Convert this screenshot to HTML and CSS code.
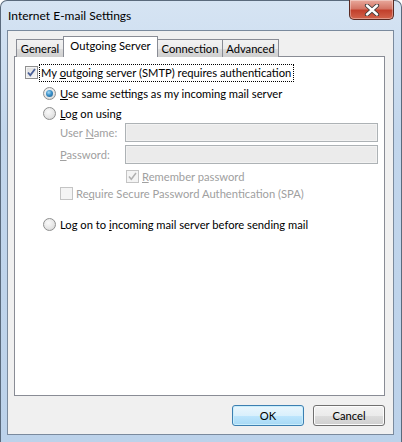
FILE: index.html
```html
<!DOCTYPE html>
<html>
<head>
<meta charset="utf-8">
<link rel="stylesheet" href="styles.css">
</head>
<body>
<div class="window">
  <div class="titlebar">
    <span class="title">Internet E-mail Settings</span>
    <div class="close">
      <svg width="16" height="12" viewBox="0 0 16 12"><path d="M3 1.5 L13 10.5 M13 1.5 L3 10.5" stroke="#3a3a3a" stroke-width="4.2" stroke-linecap="round"/><path d="M3 1.5 L13 10.5 M13 1.5 L3 10.5" stroke="#fff" stroke-width="2.4" stroke-linecap="round"/></svg>
    </div>
  </div>
  <div class="client">
    <div class="tabs">
      <div class="tab t-gen">General</div>
      <div class="tab active">Outgoing Server</div>
      <div class="tab t-con">Connection</div>
      <div class="tab t-adv">Advanced</div>
    </div>
    <div class="panel">
      <div class="row auth">
        <span class="cb"><svg width="13" height="13" viewBox="0 0 13 13"><path d="M3 6.5 L5.3 9.3 L10 3" fill="none" stroke="#4a5f97" stroke-width="1.8"/></svg></span>
        <span class="focus">My <u>o</u>utgoing server (SMTP) requires authentication</span>
      </div>
      <div class="row radio-row r1">
        <span class="rb on"></span>
        <span class="lbl"><u>U</u>se same settings as my incoming mail server</span>
      </div>
      <div class="row radio-row r2">
        <span class="rb"></span>
        <span class="lbl"><u>L</u>og on using</span>
      </div>
      <div class="field f1">
        <span class="flabel">User <u>N</u>ame:</span>
        <span class="input"></span>
      </div>
      <div class="field f2">
        <span class="flabel"><u>P</u>assword:</span>
        <span class="input"></span>
      </div>
      <div class="row remember">
        <span class="cb dis"><svg width="13" height="13" viewBox="0 0 13 13"><path d="M3 6.5 L5.3 9.3 L10 3" fill="none" stroke="#b0b0b0" stroke-width="1.5"/></svg></span>
        <span class="lbl dim"><u>R</u>emember password</span>
      </div>
      <div class="row spa">
        <span class="cb dis"></span>
        <span class="lbl dim">Re<u>q</u>uire Secure Password Authentication (SPA)</span>
      </div>
      <div class="row radio-row r3">
        <span class="rb"></span>
        <span class="lbl">Log on to <u>i</u>ncoming mail server before sending mail</span>
      </div>
    </div>
    <div class="buttons">
      <button class="btn default">OK</button>
      <button class="btn">Cancel</button>
    </div>
  </div>
</div>
</body>
</html>
```
FILE: styles.css
```css
html, body {
  margin: 0;
  padding: 0;
  background: #ffffff;
}
body {
  width: 402px;
  height: 442px;
  overflow: hidden;
  font-family: "Lato", "Noto Sans", sans-serif;
  font-size: 11.2px;
  color: #000;
}
.window {
  box-sizing: border-box;
  width: 402px;
  height: 442px;
  border: 1px solid #5a6a7c;
  border-bottom: none;
  border-radius: 7px 7px 0 0;
  background: linear-gradient(180deg, #d6e4f3 0%, #c2d6ec 30%, #bcd2ea 100%);
  padding: 0 7px 0 6px;
  display: flex;
  flex-direction: column;
}
.titlebar {
  height: 29px;
  position: relative;
  display: flex;
  align-items: center;
}
.title {
  padding-left: 1px;
  margin-top: -1px;
  color: #000;
  font-size: 12px;
}
.close {
  position: absolute;
  right: 0;
  top: -1px;
  width: 43px;
  height: 19px;
  border: 1px solid #5a2a22;
  border-top: none;
  border-radius: 0 0 5px 5px;
  background: linear-gradient(180deg, #e9a99c 0%, #d47666 45%, #c2402c 55%, #d2644c 100%);
  display: flex;
  align-items: center;
  justify-content: center;
  box-shadow: inset 0 0 0 1px rgba(255,255,255,0.35);
}
.client {
  flex: 1;
  border: 1px solid #7a8a9d;
  background: #f0f0f0;
  padding: 6px 8px 0 6px;
  display: flex;
  flex-direction: column;
  margin-bottom: 7px;
}
.tabs {
  display: flex;
  align-items: flex-end;
  height: 20px;
  padding-left: 2px;
  position: relative;
  z-index: 2;
}
.tab {
  box-sizing: border-box;
  height: 18px;
  border: 1px solid #898c95;
  border-bottom: none;
  background: linear-gradient(180deg, #f2f2f2 0%, #ebebeb 50%, #dddddd 50%, #cfcfcf 100%);
  line-height: 17px;
  text-align: center;
  white-space: nowrap;
}
.t-gen { width: 48px; }
.t-con { width: 66px; }
.t-adv { width: 57px; margin-left: -1px; }
.tab.active {
  width: 95px;
  height: 21px;
  background: #ffffff;
  margin: 0 -1px 0 -1px;
  line-height: 18px;
  position: relative;
  z-index: 3;
}
.panel {
  box-sizing: border-box;
  height: 340px;
  margin-top: -1px;
  border: 1px solid #898c95;
  background: #ffffff;
  padding: 7px 0 0 10px;
  display: flex;
  flex-direction: column;
}
.row {
  display: flex;
  align-items: center;
  white-space: nowrap;
}
.cb {
  box-sizing: border-box;
  width: 13px;
  height: 13px;
  border: 1px solid #8f8f8f;
  background: linear-gradient(135deg, #dcdcdc 0%, #f6f6f6 100%);
  box-shadow: inset 0 0 0 1px #f4f4f4;
  display: inline-flex;
  align-items: center;
  justify-content: center;
  flex: none;
}
.cb svg { margin: -1px; }
.cb.dis {
  border-color: #c4c4c4;
  background: #f4f4f4;
  box-shadow: none;
}
.auth { height: 17px; }
.auth .cb { margin-right: 2px; }
.focus {
  outline: 1px dotted #000;
  outline-offset: 0;
  padding: 0 2px 1px 1px;
  line-height: 15px;
}
.radio-row .rb { margin-right: 4px; }
.rb {
  box-sizing: border-box;
  width: 13px;
  height: 13px;
  border-radius: 50%;
  border: 1px solid #8e8f8f;
  background: radial-gradient(circle at 40% 35%, #fafafa 0%, #e6e6e6 55%, #cfcfcf 100%);
  flex: none;
  position: relative;
}
.rb.on::after {
  content: "";
  position: absolute;
  left: 2px;
  top: 2px;
  width: 7px;
  height: 7px;
  border-radius: 50%;
  background: radial-gradient(circle at 40% 35%, #a9dcf7 0%, #3a90c9 45%, #1a5b8b 100%);
}
.r1 { margin: 5px 0 0 18px; height: 14px; }
.r2 { margin: 6px 0 0 18px; height: 14px; }
.field {
  display: flex;
  align-items: center;
  margin-left: 35px;
  height: 19px;
  white-space: nowrap;
}
.f1 { margin-top: 3px; }
.f2 { margin-top: 3px; }
.flabel {
  width: 65px;
  color: #a0a0a0;
  flex: none;
}
.input {
  box-sizing: border-box;
  width: 253px;
  height: 19px;
  border: 1px solid #adb2b5;
  background: #ebebeb;
  box-shadow: inset 0 0 0 1px #f2f2f2;
}
.remember { margin: 6px 0 0 101px; height: 13px; }
.remember .cb { margin-right: 3px; }
.spa { margin: 4px 0 0 35px; height: 13px; }
.spa .cb { margin-right: 3px; }
.dim { color: #a0a0a0; }
.r3 { margin: 17px 0 0 18px; height: 14px; }
.buttons {
  display: flex;
  justify-content: flex-end;
  gap: 9px;
  padding-top: 9px;
  padding-right: 0;
}
.btn {
  box-sizing: border-box;
  width: 72px;
  height: 21px;
  font-family: inherit;
  font-size: 11.2px;
  color: #000;
  border: 1px solid #707070;
  border-radius: 3px;
  background: linear-gradient(180deg, #f2f2f2 0%, #ebebeb 50%, #dddddd 50%, #cfcfcf 100%);
  box-shadow: inset 0 0 0 1px #fcfcfc;
  padding: 0;
  line-height: 17px;
}
.btn.default {
  border-color: #3c7fb1;
  background: linear-gradient(180deg, #eaf6fd 0%, #d9f0fc 50%, #bee6fd 50%, #a7d9f5 100%);
  box-shadow: inset 0 0 0 1px #c9eefc;
}
```
